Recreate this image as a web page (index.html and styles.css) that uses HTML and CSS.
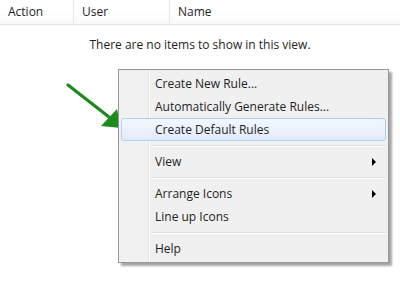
FILE: index.html
```html
<!DOCTYPE html>
<html lang="en">
<head>
	<meta charset="UTF-8">
	<title>Rules</title>
	<link rel="stylesheet" href="styles.css">
</head>
<body>
<div id="view">
    <div class="header">
        <div class="col col-action">Action</div>
        <div class="col col-user">User</div>
        <div class="col col-name">Name</div>
    </div>
    <p class="empty">There are no items to show in this view.</p>

    <svg class="pointer" width="62" height="50" viewBox="0 0 62 50">
        <line x1="8" y1="5" x2="49" y2="37" stroke="#1e8a1e" stroke-width="3.2" stroke-linecap="round"/>
        <polygon points="61,48 41,46 57,29" fill="#1e8a1e"/>
    </svg>

    <ul id="menu">
        <li>Create New Rule...</li>
        <li>Automatically Generate Rules...</li>
        <li class="on">Create Default Rules</li>
        <li class="sep"></li>
        <li class="sub">View</li>
        <li class="sep"></li>
        <li class="sub">Arrange Icons</li>
        <li>Line up Icons</li>
        <li class="sep"></li>
        <li>Help</li>
    </ul>
</div>
</body>
</html>
```

FILE: styles.css
```css
* {
    margin: 0;
    padding: 0;
    list-style: none;
}

body {
    width: 400px;
    height: 293px;
    overflow: hidden;
    background: #fff;
    font-family: "Open Sans", "Noto Sans", sans-serif;
    font-size: 12px;
    color: #1e1e1e;
}

#view {
    position: relative;
    height: 293px;
}

.header {
    display: flex;
    height: 24px;
    border-bottom: 1px solid #e5e5e5;
    background: linear-gradient(#fff, #fff 55%, #f6f7f9);
}

.col {
    line-height: 24px;
    padding-left: 8px;
    border-right: 1px solid #e6e9ee;
}

.col-action {
    width: 65px;
}

.col-user {
    width: 87px;
}

.col-name {
    flex: 1;
    border-right: none;
}

.empty {
    margin-top: 10px;
    text-align: center;
    line-height: 20px;
}

.pointer {
    position: absolute;
    left: 60px;
    top: 80px;
}

#menu {
    position: absolute;
    left: 118px;
    top: 69px;
    width: 265px;
    padding: 2px;
    background: #f0f0f0 linear-gradient(to right, #f1f1f1 29px, #e2e3e3 29px, #e2e3e3 30px, #fff 30px, #fff 31px, #f0f0f0 31px);
    border: 1px solid #979797;
    box-shadow: 3px 3px 2px rgba(0, 0, 0, .35);
}

#menu li {
    position: relative;
    height: 21px;
    line-height: 21px;
    padding-left: 33px;
    border: 1px solid transparent;
    border-radius: 3px;
}

#menu li.on {
    border-color: #aecff7;
    background: linear-gradient(#f2f7fd, #e1ecfb);
}

#menu li.sep {
    height: 9px;
    border: none;
    margin-left: 31px;
    padding: 0;
    background: linear-gradient(transparent 4px, #e0e0e0 4px, #e0e0e0 5px, #fff 5px, #fff 6px, transparent 6px);
}

#menu li.sub::after {
    content: "";
    position: absolute;
    right: 9px;
    top: 7px;
    border-left: 4px solid #000;
    border-top: 4px solid transparent;
    border-bottom: 4px solid transparent;
}
```
